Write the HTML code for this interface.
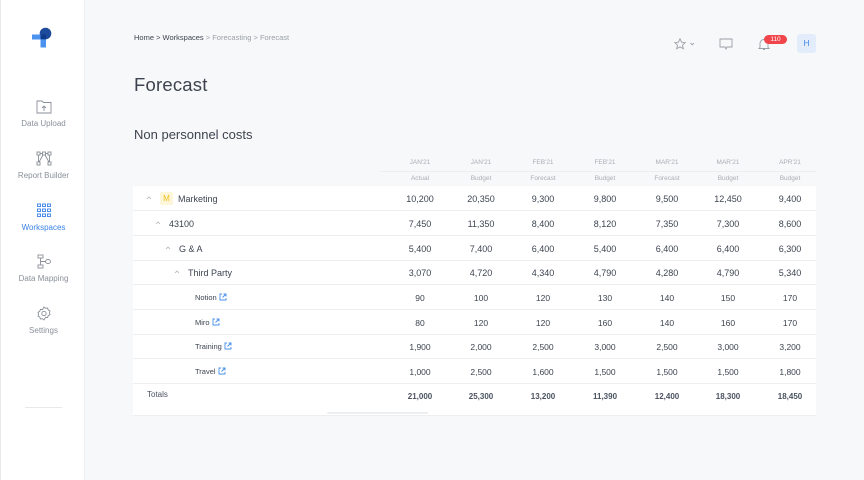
<!DOCTYPE html>
<html><head><meta charset="utf-8"><style>
*{margin:0;padding:0;box-sizing:border-box}
body{width:864px;height:480px;background:#f7f8f9;font-family:"Liberation Sans",sans-serif;position:relative;overflow:hidden;color:#3d4450}
.side{position:absolute;left:0;top:0;width:85px;height:480px;background:#fff;border-right:1px solid #eceef0;border-left:1px solid #e6e8ea}
.nav{position:absolute;left:0;width:85px;text-align:center;font-size:8px;color:#8a9099}
.nav svg{display:block;margin:0 auto 5px}
.abs{position:absolute}
.crumb{left:134px;top:33px;font-size:7.5px;color:#3d4450}
.crumb span{color:#9aa0a8}
h1{position:absolute;left:134px;top:74px;font-size:18.5px;font-weight:normal;color:#3d4450;letter-spacing:0.2px}
h2{position:absolute;left:134px;top:127px;font-size:13px;font-weight:normal;color:#3d4450}
.tbl{position:absolute;left:133px;top:186px;width:683px;height:230px;background:#fff;border-bottom:1px solid #eceef0}
.row{position:absolute;left:0;width:683px;height:25px;border-bottom:1px solid #eceef0;font-size:9px;color:#3d4450}
.row .l{position:absolute;top:8px}
.c{position:absolute;width:60px;text-align:center;top:8px}
.hd{position:absolute;font-size:6.5px;color:#a8aeb5;width:60px;text-align:center}
.car{position:absolute;top:10px}
.lk{display:inline-block;vertical-align:-1px;margin-left:2px}
</style></head><body>
<div class="side">
<svg class="abs" style="left:30px;top:25px" width="24" height="24" viewBox="0 0 24 24">
<circle cx="14.5" cy="8.5" r="5.8" fill="#1d4a9a"/>
<rect x="1" y="9.5" width="14" height="5" fill="#4b93ee"/>
<rect x="9.5" y="9.5" width="5.5" height="13" fill="#4b93ee"/>
<path d="M9.5 9.5h5.5v4.8h-5.5z" fill="#0f3a8a"/>
</svg>
<div class="nav" style="top:99px"><svg width="16" height="15" viewBox="0 0 16 15" fill="none" stroke="#8a9099" stroke-width="0.9"><path d="M1 2h5l1.5 1.5H15V14H1z"/><path d="M8 12V7M6 9l2-2 2 2"/></svg>Data Upload</div>
<div class="nav" style="top:151px"><svg width="16" height="15" viewBox="0 0 16 15" fill="none" stroke="#8a9099" stroke-width="0.9"><rect x="1" y="1" width="3" height="3"/><rect x="6.5" y="1" width="3" height="3"/><rect x="12" y="1" width="3" height="3"/><rect x="1" y="11" width="3" height="3"/><rect x="12" y="11" width="3" height="3"/><path d="M4 2.5h2.5M9.5 2.5H12M2.5 4l0 7M13.5 4v7M7 4L3 11M9 4l4 7"/></svg>Report Builder</div>
<div class="nav" style="top:203px;color:#3b82e6"><svg width="16" height="15" viewBox="0 0 16 15" fill="none" stroke="#3b82e6" stroke-width="0.9"><rect x="1.5" y="1" width="3" height="2.5"/><rect x="6.5" y="1" width="3" height="2.5"/><rect x="11.5" y="1" width="3" height="2.5"/><rect x="1.5" y="6" width="3" height="2.5"/><rect x="6.5" y="6" width="3" height="2.5"/><rect x="11.5" y="6" width="3" height="2.5"/><rect x="1.5" y="11" width="3" height="2.5"/><rect x="6.5" y="11" width="3" height="2.5"/><rect x="11.5" y="11" width="3" height="2.5"/></svg>Workspaces</div>
<div class="nav" style="top:254px"><svg width="16" height="15" viewBox="0 0 16 15" fill="none" stroke="#8a9099" stroke-width="0.9"><rect x="2" y="1" width="5" height="3"/><rect x="2" y="11" width="5" height="3"/><path d="M4.5 4v7M4.5 7.5h5"/><ellipse cx="12" cy="7.5" rx="2.5" ry="2"/></svg>Data Mapping</div>
<div class="nav" style="top:306px"><svg width="16" height="15" viewBox="0 0 16 15" fill="none" stroke="#8a9099" stroke-width="0.9"><path d="M8 1l1.6 1.3 2-.3.6 1.9 1.8 1-.6 1.9.6 1.9-1.8 1-.6 1.9-2-.3L8 14l-1.6-1.3-2 .3-.6-1.9-1.8-1 .6-1.9-.6-1.9 1.8-1 .6-1.9 2 .3z"/><circle cx="8" cy="7.5" r="2.2"/></svg>Settings</div>
<div class="abs" style="left:24px;top:407px;width:37px;height:1px;background:#e6e8ea"></div>
</div>

<div class="abs crumb">Home &gt; Workspaces <span>&gt; Forecasting &gt; Forecast</span></div>
<h1>Forecast</h1>
<h2>Non personnel costs</h2>

<svg class="abs" style="left:674px;top:38px" width="24" height="12" viewBox="0 0 24 12" fill="none" stroke="#9aa0a8" stroke-width="0.9"><path d="M6 0.8l1.6 3.4 3.6.4-2.7 2.5.8 3.6L6 8.9 2.7 10.7l.8-3.6L.8 4.6l3.6-.4z"/><path d="M16.5 5l1.8 1.8L20 5"/></svg>
<svg class="abs" style="left:719px;top:38px" width="14" height="12" viewBox="0 0 14 12" fill="none" stroke="#9aa0a8" stroke-width="0.9"><path d="M1 1h12v8H8l-1 2-1-2H1z"/></svg>
<svg class="abs" style="left:758px;top:38px" width="12" height="13" viewBox="0 0 12 13" fill="none" stroke="#9aa0a8" stroke-width="0.9"><path d="M2 9.5V5.5a4 4 0 0 1 8 0v4l1 1H1zM5 11.5h2"/></svg>
<div class="abs" style="left:764px;top:35px;width:23px;height:9px;background:#f0454a;border-radius:5px;color:#fff;font-size:6.5px;text-align:center;line-height:9px">110</div>
<div class="abs" style="left:797px;top:34px;width:19px;height:19px;background:#e3ecfb;border-radius:3px;color:#3b82e6;font-size:8px;text-align:center;line-height:19px">H</div>

<div class="abs" style="left:380px;top:171px;width:436px;height:1px;background:#eceef0"></div>
<div class="hd" style="left:390px;top:159px">JAN'21</div><div class="hd" style="left:451px;top:159px">JAN'21</div><div class="hd" style="left:513px;top:159px">FEB'21</div><div class="hd" style="left:575px;top:159px">FEB'21</div><div class="hd" style="left:637px;top:159px">MAR'21</div><div class="hd" style="left:698px;top:159px">MAR'21</div><div class="hd" style="left:760px;top:159px">APR'21</div>
<div class="hd" style="left:390px;top:175px">Actual</div><div class="hd" style="left:451px;top:175px">Budget</div><div class="hd" style="left:513px;top:175px">Forecast</div><div class="hd" style="left:575px;top:175px">Budget</div><div class="hd" style="left:637px;top:175px">Forecast</div><div class="hd" style="left:698px;top:175px">Budget</div><div class="hd" style="left:760px;top:175px">Budget</div>

<div class="tbl">
<div class="row" style="top:0"><svg class="car" style="left:13px" width="6" height="4" viewBox="0 0 6 4" fill="none" stroke="#b0b5bb" stroke-width="0.8"><path d="M1 3l2-2 2 2"/></svg><span class="abs" style="left:27px;top:6px;width:13px;height:13px;background:#fdf6d8;color:#f1c21b;font-size:8px;text-align:center;line-height:13px;border-radius:2px">M</span><span class="l" style="left:45px">Marketing</span>
<span class="c" style="left:257px">10,200</span><span class="c" style="left:318px">20,350</span><span class="c" style="left:380px">9,300</span><span class="c" style="left:442px">9,800</span><span class="c" style="left:504px">9,500</span><span class="c" style="left:565px">12,450</span><span class="c" style="left:627px">9,400</span></div>
<div class="row" style="top:25px"><svg class="car" style="left:22px" width="6" height="4" viewBox="0 0 6 4" fill="none" stroke="#b0b5bb" stroke-width="0.8"><path d="M1 3l2-2 2 2"/></svg><span class="l" style="left:36px">43100</span>
<span class="c" style="left:257px">7,450</span><span class="c" style="left:318px">11,350</span><span class="c" style="left:380px">8,400</span><span class="c" style="left:442px">8,120</span><span class="c" style="left:504px">7,350</span><span class="c" style="left:565px">7,300</span><span class="c" style="left:627px">8,600</span></div>
<div class="row" style="top:50px"><svg class="car" style="left:32px" width="6" height="4" viewBox="0 0 6 4" fill="none" stroke="#b0b5bb" stroke-width="0.8"><path d="M1 3l2-2 2 2"/></svg><span class="l" style="left:46px">G &amp; A</span>
<span class="c" style="left:257px">5,400</span><span class="c" style="left:318px">7,400</span><span class="c" style="left:380px">6,400</span><span class="c" style="left:442px">5,400</span><span class="c" style="left:504px">6,400</span><span class="c" style="left:565px">6,400</span><span class="c" style="left:627px">6,300</span></div>
<div class="row" style="top:74px"><svg class="car" style="left:41px" width="6" height="4" viewBox="0 0 6 4" fill="none" stroke="#b0b5bb" stroke-width="0.8"><path d="M1 3l2-2 2 2"/></svg><span class="l" style="left:55px">Third Party</span>
<span class="c" style="left:257px">3,070</span><span class="c" style="left:318px">4,720</span><span class="c" style="left:380px">4,340</span><span class="c" style="left:442px">4,790</span><span class="c" style="left:504px">4,280</span><span class="c" style="left:565px">4,790</span><span class="c" style="left:627px">5,340</span></div>
<div class="row" style="top:99px;font-size:7.5px"><span class="l" style="left:62px">Notion<svg class="lk" width="8" height="8" viewBox="0 0 8 8" fill="none" stroke="#4a90e8" stroke-width="0.9"><path d="M3 1H1v6h6V5M4.5 1H7v2.5M7 1L3.5 4.5"/></svg></span>
<span class="c" style="left:257px;font-size:8.5px">90</span><span class="c" style="left:318px;font-size:8.5px">100</span><span class="c" style="left:380px;font-size:8.5px">120</span><span class="c" style="left:442px;font-size:8.5px">130</span><span class="c" style="left:504px;font-size:8.5px">140</span><span class="c" style="left:565px;font-size:8.5px">150</span><span class="c" style="left:627px;font-size:8.5px">170</span></div>
<div class="row" style="top:124px;font-size:7.5px"><span class="l" style="left:62px">Miro<svg class="lk" width="8" height="8" viewBox="0 0 8 8" fill="none" stroke="#4a90e8" stroke-width="0.9"><path d="M3 1H1v6h6V5M4.5 1H7v2.5M7 1L3.5 4.5"/></svg></span>
<span class="c" style="left:257px;font-size:8.5px">80</span><span class="c" style="left:318px;font-size:8.5px">120</span><span class="c" style="left:380px;font-size:8.5px">120</span><span class="c" style="left:442px;font-size:8.5px">160</span><span class="c" style="left:504px;font-size:8.5px">140</span><span class="c" style="left:565px;font-size:8.5px">160</span><span class="c" style="left:627px;font-size:8.5px">170</span></div>
<div class="row" style="top:148px;font-size:7.5px"><span class="l" style="left:62px">Training<svg class="lk" width="8" height="8" viewBox="0 0 8 8" fill="none" stroke="#4a90e8" stroke-width="0.9"><path d="M3 1H1v6h6V5M4.5 1H7v2.5M7 1L3.5 4.5"/></svg></span>
<span class="c" style="left:257px;font-size:8.5px">1,900</span><span class="c" style="left:318px;font-size:8.5px">2,000</span><span class="c" style="left:380px;font-size:8.5px">2,500</span><span class="c" style="left:442px;font-size:8.5px">3,000</span><span class="c" style="left:504px;font-size:8.5px">2,500</span><span class="c" style="left:565px;font-size:8.5px">3,000</span><span class="c" style="left:627px;font-size:8.5px">3,200</span></div>
<div class="row" style="top:173px;font-size:7.5px"><span class="l" style="left:62px">Travel<svg class="lk" width="8" height="8" viewBox="0 0 8 8" fill="none" stroke="#4a90e8" stroke-width="0.9"><path d="M3 1H1v6h6V5M4.5 1H7v2.5M7 1L3.5 4.5"/></svg></span>
<span class="c" style="left:257px;font-size:8.5px">1,000</span><span class="c" style="left:318px;font-size:8.5px">2,500</span><span class="c" style="left:380px;font-size:8.5px">1,600</span><span class="c" style="left:442px;font-size:8.5px">1,500</span><span class="c" style="left:504px;font-size:8.5px">1,500</span><span class="c" style="left:565px;font-size:8.5px">1,500</span><span class="c" style="left:627px;font-size:8.5px">1,800</span></div>
<div class="row" style="top:198px;border:none;font-size:8px;font-weight:bold;color:#4a5260"><span class="l" style="left:14px;top:6px;font-weight:normal">Totals</span>
<span class="c" style="left:257px">21,000</span><span class="c" style="left:318px">25,300</span><span class="c" style="left:380px">13,200</span><span class="c" style="left:442px">11,390</span><span class="c" style="left:504px">12,400</span><span class="c" style="left:565px">18,300</span><span class="c" style="left:627px">18,450</span></div>
<div class="abs" style="left:194px;top:226px;width:101px;height:2px;background:#eceef0;border-radius:1px"></div>
</div>
</body></html>
